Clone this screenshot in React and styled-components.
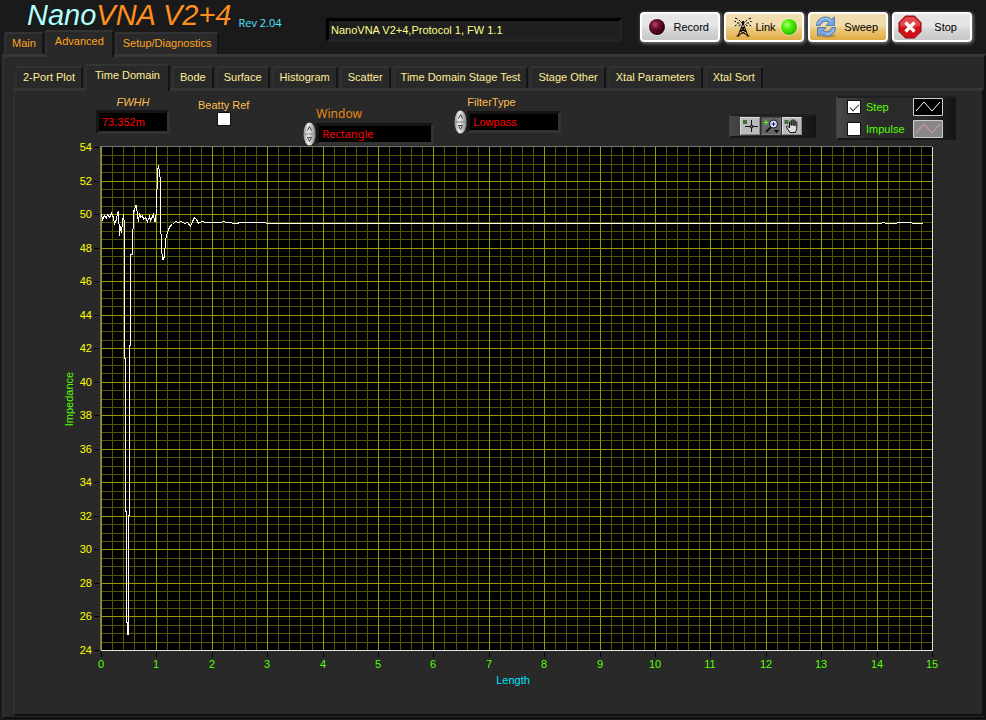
import React, { useState } from 'react'
import styled, { createGlobalStyle, css } from 'styled-components'

const GlobalStyle = createGlobalStyle`
  * {
    box-sizing: border-box;
  }
  body {
    margin: 0;
    background: #1a1a1a;
    font: 11px/14px "Liberation Sans", Arial, sans-serif;
  }
  button, input, select {
    font: inherit;
  }
`

const Page = styled.div`
  display: flex;
  flex-direction: column;
  min-height: 100vh;
  padding: 0 0 1px 2px;
`

const Header = styled.header`
  display: flex;
  justify-content: space-between;
  height: 54px;
`

const Brand = styled.div`
  display: flex;
  flex-direction: column;
  justify-content: space-between;
  width: 300px;
`

const TitleLine = styled.div`
  display: flex;
  align-items: flex-end;
  gap: 7px;
  height: 30px;
  padding-left: 25px;
`

const Title = styled.h1`
  margin: 0;
  color: #ff9020;
  font-size: 29px;
  line-height: 30px;
  font-weight: normal;
  font-style: italic;

  span {
    color: #b0ffff;
  }
`

const Revision = styled.span`
  color: #50e8ff;
  font: 11px/14px "Open Sans", sans-serif;
`

const StatusField = styled.input`
  flex: 1;
  max-width: 297px;
  height: 24px;
  margin: 18px 18px 0 24px;
  padding: 0 2px;
  border: 3px solid;
  border-color: #000 #242424 #242424 #000;
  background: #1f1f1f;
  color: #ffff8c;
`

const Commands = styled.div`
  display: flex;
  gap: 4px;
  padding: 12px 14px 0 0;
`

const CommandButton = styled.button`
  display: flex;
  align-items: center;
  justify-content: space-between;
  width: 80px;
  height: 30px;
  padding: 0 ${({ $end }) => $end || 9}px 0 ${({ $start }) => $start || 5}px;
  border: 2px solid #fff;
  border-radius: 4px;
  background: ${({ $on }) => ($on
    ? 'linear-gradient(#f1dcae 0 45%, #edcb82 55%, #e0ac42)'
    : 'linear-gradient(#e6e6e6 0 45%, #dadada 55%, #c6c6c6)')};
  box-shadow: 1px 1px 3px 1px #666;
  color: #000;
`

const TabList = styled.div`
  display: flex;
  align-items: flex-end;
  gap: ${({ $gap }) => $gap}px;
  padding-left: ${({ $indent }) => $indent}px;
`

const Tab = styled.button`
  height: 22px;
  padding: 0 6px 2px;
  border: 2px solid;
  border-color: #343434 #141414 transparent #2f2f2f;
  border-bottom: 0;
  border-radius: 2px 2px 0 0;
  background: #292929;
  color: ${({ $color }) => $color};
  white-space: nowrap;

  ${({ $active }) => $active && css`
    position: relative;
    height: 27px;
    margin-bottom: -3px;
    padding: 0 8px 8px;
    z-index: 1;
  `}
`

const OuterPanel = styled.main`
  flex: 1;
  display: flex;
  flex-direction: column;
  padding: 7px 0 1px 9px;
  border: 2px solid;
  border-color: #373737 #101010 #101010 #303030;
  border-top-width: 3px;
  background: #292929;
`

const InnerPanel = styled.section`
  flex: 1;
  border: 2px solid;
  border-color: #363636 #111 #111 #303030;
  border-top-width: 3px;
  background: #292929;
`

const Controls = styled.div`
  display: flex;
  align-items: flex-start;
  height: 52px;
  padding: 4px 26px 0 81px;
`

const Field = styled.div`
  display: flex;
  flex-direction: column;
  align-items: ${({ $align }) => $align || 'flex-start'};
  gap: 1px;
  margin: ${({ $top }) => $top || 0}px ${({ $right }) => $right || 0}px 0 0;
  color: #ffbe50;
`

const ReadOut = styled.input`
  width: 74px;
  height: 24px;
  padding: 0 3px;
  border: 3px solid;
  border-color: #151515 #333 #333 #151515;
  background: #000;
  color: #f00;
`

const FieldLabel = styled.label`
  padding-left: ${({ $indent }) => $indent || 0}px;
  font-style: ${({ $italic }) => ($italic ? 'italic' : 'normal')};
`

const WindowLabel = styled(FieldLabel)`
  color: #e88a10;
  font: 12px/14px "Noto Sans", sans-serif;
`

const SelectLine = styled.div`
  display: flex;
  align-items: center;
`

const Select = styled.select`
  appearance: none;
  width: ${({ $width }) => $width}px;
  height: 22px;
  padding: 0 3px;
  border: 3px solid;
  border-color: #151515 #333 #333 #151515;
  border-radius: 0;
  background: #000;
  color: #f00;
  font-family: ${({ $face }) => $face || 'inherit'};
`

const CheckBox = styled.input`
  appearance: none;
  display: grid;
  place-items: center;
  width: 12px;
  height: 12px;
  margin: 0;
  border: 1px solid #fff;
  background: #fff;
  outline: 1px solid #111;

  &:checked::before {
    content: '';
    width: 8px;
    height: 4px;
    border: solid #333;
    border-width: 0 0 1px 1px;
    transform: translateY(-1px) rotate(-45deg);
  }
`

const bevel = css`
  border: 2px solid;
  border-color: #202020 #151515 #181818 #444;
  background: linear-gradient(90deg, #484848, #2a2a2a 32px calc(100% - 30px), #141414);
`

const Palette = styled.div`
  ${bevel}
  display: flex;
  gap: 1px;
  margin: 19px 20px 0 auto;
  padding: 1px 12px 1px 9px;
`

const Tool = styled.button`
  display: flex;
  width: 20px;
  height: 18px;
  padding: 0;
  border: 1px solid;
  border-color: ${({ $pressed }) => ($pressed ? '#444 #777 #777 #444' : '#ddd #888 #888 #ddd')};
  background: ${({ $pressed }) => ($pressed ? '#666' : '#bbb')};
`

const Legend = styled.div`
  ${bevel}
  display: flex;
  flex-direction: column;
  gap: 4px;
  width: 120px;
  margin-top: 1px;
  padding: 0 11px 0 10px;
`

const LegendItem = styled.label`
  display: grid;
  grid-template-columns: 12px 1fr 30px;
  align-items: center;
  column-gap: 6px;
  height: 18px;
  color: #54ff00;

  svg {
    display: block;
  }
`

const ChartImage = styled.svg`
  display: block;
  width: 100%;
  height: auto;
  overflow: visible;
  font: 11px "Liberation Sans", Arial, sans-serif;
`

const outerTabs = ['Main', 'Advanced', 'Setup/Diagnostics']
const innerTabs = [
  '2-Port Plot',
  'Time Domain',
  'Bode',
  'Surface',
  'Histogram',
  'Scatter',
  'Time Domain Stage Test',
  'Stage Other',
  'Xtal Parameters',
  'Xtal Sort',
]

const Led = ({ id, light, color, dark }) => (
  <svg width="20" height="20" viewBox="0 0 20 20" aria-hidden="true">
    <defs>
      <radialGradient id={id} cx="0.38" cy="0.35" r="0.65">
        <stop offset="0" stopColor={light} />
        <stop offset="0.45" stopColor={color} />
        <stop offset="1" stopColor={dark} />
      </radialGradient>
    </defs>
    <circle cx="10" cy="10" r="9" fill="#fff" opacity="0.45" />
    <circle cx="10" cy="10" r="8" fill={`url(#${id})`} />
  </svg>
)

const Antenna = () => (
  <svg width="18" height="20" viewBox="0 0 18 20" fill="none" stroke="#000" aria-hidden="true">
    <path d="M9 6 4 19M9 6l5 13M7.500 10.500h3M6.500 13.500h5M7.500 11l4.500 3-7 4M10.500 11l-4.500 3 7 4M2.500 19h3M12.500 19h3" />
    <circle cx="9" cy="5.500" r="1.200" fill="#000" />
    <path d="M6.500 4.500 5 3M5.500 6H3M6.500 7.500 4.500 9M11.500 4.500 13 3M12.500 6H15M11.500 7.500 13.500 9M3.500 2 1 1M2 4.500H.5M2.500 8 .8 9M14.500 2 17 1M16 4.500h1.500M15.500 8l1.700 1" />
  </svg>
)

const SweepArrows = () => (
  <svg width="22" height="22" viewBox="0 0 22 22" aria-hidden="true">
    <ellipse cx="12" cy="20" rx="9" ry="1.800" fill="#9a7a38" opacity="0.5" />
    <g fill="#7aa5dc" stroke="#3f6fae" strokeWidth="0.8" strokeLinejoin="round">
      <path d="M1.500 9.500C1.500 4 6 1 10.500 1c2.500 0 4.500.8 6 2.200L19.500 1v8.500H11l2.800-3C11 4.500 7 5 5.200 9.500Z" />
      <path d="M20.500 11.500c0 5.500-4.500 8.500-9 8.500-2.500 0-4.500-.8-6-2.200L2.500 20v-8.500H11l-2.800 3c2.800 2 6.800 1.500 8.600-3Z" />
    </g>
    <path d="M3 8C4 4 7.500 2.500 10.500 2.500c2.500 0 4 .9 6 2.500M19 13c-1 3.500-4 5.500-7.500 5.500" fill="none" stroke="#b7d2f3" />
  </svg>
)

const StopSign = () => (
  <svg width="24" height="24" viewBox="0 0 24 24" aria-hidden="true">
    <path d="M7.500 1h9L23 7.500v9L16.500 23h-9L1 16.500v-9Z" fill="#cf1219" stroke="#8f0508" />
    <path d="M8 2h8l6 6v3Q12 13 2 11V8Z" fill="#e2545a" opacity="0.8" />
    <path d="m7.500 7.500 9 9M16.500 7.500l-9 9" stroke="#fff" strokeWidth="3.200" />
  </svg>
)

const Spinner = () => (
  <svg width="13" height="24" viewBox="0 0 13 24" aria-hidden="true">
    <defs>
      <linearGradient id="metal">
        <stop offset="0" stopColor="#999" />
        <stop offset="0.4" stopColor="#eee" />
        <stop offset="1" stopColor="#888" />
      </linearGradient>
    </defs>
    <ellipse cx="6.500" cy="12" rx="6" ry="11.500" fill="url(#metal)" />
    <path d="M1 12h11" stroke="#888" />
    <path d="m4.500 8.500 2-4 2 4M4.500 15.500h4l-2 4Z" fill="none" stroke="#444" />
  </svg>
)

const CursorIcon = () => (
  <svg width="18" height="16" viewBox="0 0 18 16" aria-hidden="true">
    <path d="M2 2h4v4H2z" fill="#4a6a40" />
    <path d="M10.500 2v12M4 8.500h13" stroke="#111" />
    <circle cx="10.500" cy="8.500" r="1.500" fill="#777" stroke="#111" />
  </svg>
)

const ZoomIcon = () => (
  <svg width="18" height="16" viewBox="0 0 18 16" aria-hidden="true">
    <path d="M4 2v5M1.500 4.500h5" stroke="#4dff20" />
    <path d="m9 9-5 5" stroke="#111" strokeWidth="2" />
    <circle cx="11.500" cy="6" r="4" fill="#dde3ff" stroke="#111" />
    <path d="M11.500 4v4M9.500 6h4" stroke="#1a1a80" />
    <path d="M12 12h5l-2.500 3Z" fill="#000" />
  </svg>
)

const HandIcon = () => (
  <svg width="18" height="16" viewBox="0 0 18 16" aria-hidden="true">
    <path d="M1.500 2h4v4h-4z" fill="#4a6a40" />
    <path d="M7 14.500 3.500 9.500Q3 8 4.500 8L6.500 10V4q.8-1.500 1.700 0v3.500V2.500q.9-1.500 1.900 0v5V2.500q.9-1.300 1.900 0V8V4q1-1.200 1.800 0v6.500l-1.300 4Z" fill="#ddd" stroke="#111" />
  </svg>
)

const PlotSample = ({ background, color }) => (
  <svg width="30" height="18" viewBox="0 0 30 18" aria-hidden="true">
    <path d="M.5.5h29v17H.5z" fill={background} stroke="#ccc" />
    <path d="m3 13 8-9 8 9 8-9" fill="none" stroke={color} />
  </svg>
)

// plot area inside the drawing
const LEFT = 86
const TOP = 4
const WIDTH = 831
const HEIGHT = 503

const toX = (length) => Math.round(LEFT + (length * WIDTH) / 15)
const toY = (impedance) => Math.round(TOP + ((54 - impedance) * HEIGHT) / 30)

const range = (count) => Array.from({ length: count }, (_, i) => i)

// points relative to the plot's top left corner
const trace = [
  [0, 67], [1, 72], [3, 68], [5, 71], [6, 67], [8, 70], [10, 66],
  [12, 70], [13, 76], [15, 72], [16, 66], [17, 64], [18, 88], [19, 79],
  [20, 85], [21, 74], [22, 67], [23, 78], [23, 211], [24, 211], [24, 364],
  [25, 364], [25, 475], [26, 475], [26, 487], [27, 487], [27, 368], [28, 368],
  [28, 198], [29, 198], [29, 107], [31, 107], [31, 101], [32, 63], [33, 64],
  [34, 58], [35, 58], [36, 68], [37, 74], [38, 66], [39, 70], [41, 68],
  [42, 72], [44, 70], [46, 74], [48, 69], [49, 73], [51, 69], [52, 67],
  [53, 74], [54, 74], [55, 61], [56, 23], [57, 18], [58, 25], [59, 33],
  [59, 71], [60, 101], [61, 112], [62, 112], [63, 108], [64, 93], [65, 88],
  [67, 82], [69, 78], [71, 77], [74, 74], [77, 75], [80, 74], [83, 76],
  [86, 75], [89, 79], [91, 74], [93, 70], [95, 72], [97, 76], [100, 74],
  [105, 75], [119, 75], [122, 74], [125, 75], [135, 76], [139, 75], [159, 75],
  [169, 76], [779, 76], [782, 75], [785, 76], [807, 75], [814, 76], [821, 76],
]

const tracePoints = trace.map(([x, y]) => `${x + LEFT + 0.5},${y + TOP + 0.5}`).join(' ')

const Chart = ({ showStep }) => (
  <ChartImage viewBox="0 0 967 548" role="img" aria-label="Impedance over length">
    <g shapeRendering="crispEdges">
      <rect x={LEFT} y={TOP} width={WIDTH} height={HEIGHT} fill="#000" />
      <g stroke="#565600">
        {range(75).map((i) => (
          <path key={`x${i}`} d={`M${toX(i / 5) + 0.5} ${TOP}v${HEIGHT}`} />
        ))}
        {range(60).map((i) => (
          <path key={`y${i}`} d={`M${LEFT} ${toY(24 + i / 2) + 0.5}h${WIDTH}`} />
        ))}
      </g>
      <g stroke="#999900">
        {range(15).map((i) => (
          <path key={`x${i}`} d={`M${toX(i) + 0.5} ${TOP}v${HEIGHT}`} />
        ))}
        {range(15).map((i) => (
          <path key={`y${i}`} d={`M${LEFT} ${toY(24 + i * 2) + 0.5}h${WIDTH}`} />
        ))}
      </g>
      {showStep && <polyline points={tracePoints} fill="none" stroke="#fff" />}
      <path d={`M${LEFT - 0.5} ${TOP + HEIGHT}V${TOP - 0.5}h${WIDTH}`} fill="none" stroke="#777" />
      <path d={`M${LEFT} ${TOP + HEIGHT + 0.5}h${WIDTH + 0.5}V${TOP}`} fill="none" stroke="#e0e0e0" />
      <g stroke="#000">
        {range(16).map((i) => (
          <path key={`y${i}`} d={`M${LEFT - 7} ${toY(24 + i * 2) + 0.5}h5`} />
        ))}
        {range(16).map((i) => (
          <path key={`x${i}`} d={`M${toX(i) + 0.5} ${TOP + HEIGHT + 2}v5`} />
        ))}
      </g>
    </g>
    <g fill="#ffff00" textAnchor="end">
      {range(16).map((i) => (
        <text key={i} x={LEFT - 9} y={toY(24 + i * 2) + 4}>{24 + i * 2}</text>
      ))}
    </g>
    <g fill="#54ff00" textAnchor="middle">
      {range(16).map((i) => (
        <text key={i} x={toX(i)} y={TOP + HEIGHT + 18}>{i}</text>
      ))}
      <text transform="translate(58 256) rotate(-90)">Impedance</text>
    </g>
    <text x="498" y="541" fill="#00e5ff" textAnchor="middle">Length</text>
  </ChartImage>
)

const Tabs = ({ names, active, onSelect, color, gap, indent }) => (
  <TabList role="tablist" $gap={gap} $indent={indent}>
    {names.map((name) => (
      <Tab
        key={name}
        role="tab"
        aria-selected={name === active}
        $active={name === active}
        $color={color}
        onClick={() => onSelect(name)}
      >
        {name}
      </Tab>
    ))}
  </TabList>
)

const App = () => {
  const [page, setPage] = useState('Advanced')
  const [view, setView] = useState('Time Domain')
  const [step, setStep] = useState(true)

  return (
    <Page>
      <GlobalStyle />
      <Header>
        <Brand>
          <TitleLine>
            <Title><span>Nano</span>VNA V2+4</Title>
            <Revision>Rev 2.04</Revision>
          </TitleLine>
          <Tabs names={outerTabs} active={page} onSelect={setPage} color="#ffa51e" gap={1} indent={2} />
        </Brand>
        <StatusField aria-label="Device" readOnly value="NanoVNA V2+4,Protocol 1, FW 1.1" />
        <Commands>
          <CommandButton>
            <Led id="record" light="#b0486a" color="#6a0a28" dark="#30000f" />
            Record
          </CommandButton>
          <CommandButton $on $start={8} $end={3}>
            <Antenna />
            Link
            <Led id="link" light="#b0ff80" color="#4cf000" dark="#2cb800" />
          </CommandButton>
          <CommandButton $on $end={8}>
            <SweepArrows />
            Sweep
          </CommandButton>
          <CommandButton $start={4} $end={13}>
            <StopSign />
            Stop
          </CommandButton>
        </Commands>
      </Header>
      <OuterPanel>
        <Tabs names={innerTabs} active={view} onSelect={setView} color="#ffee96" gap={2} indent={2} />
        <InnerPanel>
          <Controls>
            <Field $align="center" $right={28}>
              <FieldLabel htmlFor="fwhh" $italic>FWHH</FieldLabel>
              <ReadOut id="fwhh" readOnly value="73.352m" />
            </Field>
            <Field $align="center" $top={3} $right={54}>
              <FieldLabel htmlFor="beatty">Beatty Ref</FieldLabel>
              <CheckBox id="beatty" type="checkbox" />
            </Field>
            <Field $top={12} $right={20}>
              <WindowLabel htmlFor="window" $indent={13}>Window</WindowLabel>
              <SelectLine>
                <Spinner />
                <Select id="window" $width={118} $face={'"Noto Sans", sans-serif'}>
                  <option>Rectangle</option>
                </Select>
              </SelectLine>
            </Field>
            <Field>
              <FieldLabel htmlFor="filter" $indent={13}>FilterType</FieldLabel>
              <SelectLine>
                <Spinner />
                <Select id="filter" $width={94}>
                  <option>Lowpass</option>
                </Select>
              </SelectLine>
            </Field>
            <Palette>
              <Tool aria-label="Cursor"><CursorIcon /></Tool>
              <Tool aria-label="Zoom" $pressed><ZoomIcon /></Tool>
              <Tool aria-label="Pan"><HandIcon /></Tool>
            </Palette>
            <Legend>
              <LegendItem>
                <CheckBox type="checkbox" checked={step} onChange={() => setStep(!step)} />
                Step
                <PlotSample background="#000" color="#fff" />
              </LegendItem>
              <LegendItem>
                <CheckBox type="checkbox" />
                Impulse
                <PlotSample background="#888" color="#f0a0a0" />
              </LegendItem>
            </Legend>
          </Controls>
          <Chart showStep={step} />
        </InnerPanel>
      </OuterPanel>
    </Page>
  )
}

export default App
